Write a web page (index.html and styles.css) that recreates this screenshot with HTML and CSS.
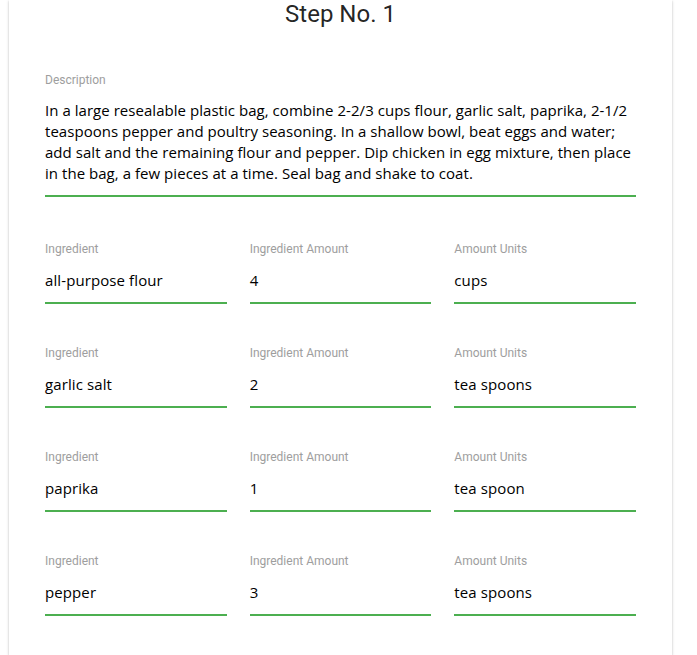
FILE: index.html
```html
<!DOCTYPE html>
<html>
<head>
<meta charset="utf-8">
<link rel="stylesheet" href="styles.css">
</head>
<body>
<div class="card">
  <h1 class="title">Step No. 1</h1>
  <div class="field desc">
    <div class="label">Description</div>
    <div class="value multiline">In a large resealable plastic bag, combine 2-2/3 cups flour, garlic salt, paprika, 2-1/2 teaspoons pepper and poultry seasoning. In a shallow bowl, beat eggs and water; add salt and the remaining flour and pepper. Dip chicken in egg mixture, then place in the bag, a few pieces at a time. Seal bag and shake to coat.</div>
  </div>
  <div class="rows">
    <div class="field"><div class="label">Ingredient</div><div class="value">all-purpose flour</div></div>
    <div class="field"><div class="label">Ingredient Amount</div><div class="value">4</div></div>
    <div class="field"><div class="label">Amount Units</div><div class="value">cups</div></div>

    <div class="field"><div class="label">Ingredient</div><div class="value">garlic salt</div></div>
    <div class="field"><div class="label">Ingredient Amount</div><div class="value">2</div></div>
    <div class="field"><div class="label">Amount Units</div><div class="value">tea spoons</div></div>

    <div class="field"><div class="label">Ingredient</div><div class="value">paprika</div></div>
    <div class="field"><div class="label">Ingredient Amount</div><div class="value">1</div></div>
    <div class="field"><div class="label">Amount Units</div><div class="value">tea spoon</div></div>

    <div class="field"><div class="label">Ingredient</div><div class="value">pepper</div></div>
    <div class="field"><div class="label">Ingredient Amount</div><div class="value">3</div></div>
    <div class="field"><div class="label">Amount Units</div><div class="value">tea spoons</div></div>
  </div>
</div>
</body>
</html>
```
FILE: styles.css
```css
html, body {
  margin: 0;
  padding: 0;
  background: #fff;
}
body {
  font-family: "Open Sans", "Noto Sans", sans-serif;
  color: #000;
}
.card {
  box-sizing: border-box;
  min-height: 100vh;
  margin: 0 25px 0 9px;
  padding: 0 36px 30px;
  background: #fff;
  box-shadow: 0 1px 3px rgba(0,0,0,0.2), 0 1px 1px rgba(0,0,0,0.14), 0 2px 1px -1px rgba(0,0,0,0.12);
}
.title {
  margin: 0;
  font-family: Roboto, sans-serif;
  font-weight: 400;
  font-size: 24px;
  line-height: 28px;
  text-align: center;
  color: rgba(0,0,0,0.87);
}
.field {
  display: flex;
  flex-direction: column;
}
.label {
  font-family: Roboto, sans-serif;
  font-size: 12px;
  line-height: 16px;
  color: #9e9e9e;
}
.value {
  margin-top: 13px;
  font-size: 15px;
  line-height: 21px;
  letter-spacing: 0.1px;
  padding-bottom: 11.5px;
  border-bottom: 2px solid #4caf50;
}
.desc {
  margin-top: 44px;
}
.desc .multiline {
  margin-top: 11.5px;
  line-height: 21.33px;
  letter-spacing: 0.04px;
  padding-bottom: 10px;
}
.rows {
  margin-top: 43.7px;
  display: grid;
  grid-template-columns: repeat(3, 1fr);
  column-gap: 23px;
  row-gap: 40.5px;
}
```
